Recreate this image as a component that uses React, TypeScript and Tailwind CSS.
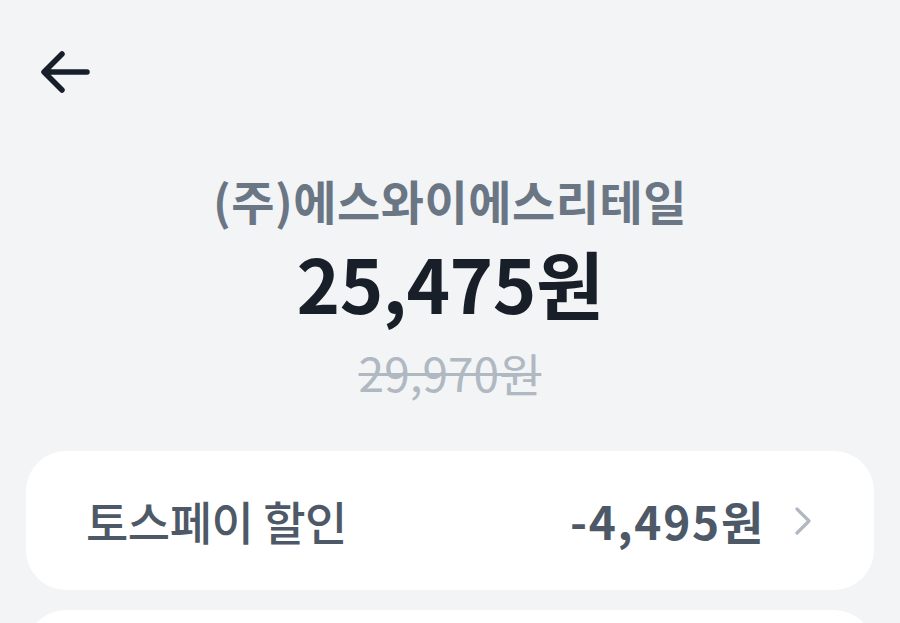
import { ChevronRight } from "lucide-react";

const FONT = "font-['Noto_Sans_CJK_KR','Noto_Sans',sans-serif]";

function BackArrow() {
  return (
    <svg width="52" height="44" viewBox="0 0 52 44" fill="none" aria-hidden="true">
      <path
        d="M47 22H5M22 4L4 22l18 18"
        stroke="#191f28"
        strokeWidth="5.5"
        strokeLinecap="round"
        strokeLinejoin="round"
      />
    </svg>
  );
}

export default function App() {
  return (
    <div className={`min-h-screen bg-[#f2f4f6] ${FONT}`}>
      <div className="pl-[40px] pt-[50px]">
        <BackArrow />
      </div>

      <div className="mt-[79px] flex flex-col items-center">
        <p className="text-[47px] font-semibold leading-[54px] tracking-[0.5px] text-[#6b7684]">
          (주)에스와이에스리테일
        </p>
        <p className="mt-[15px] text-[74px] font-bold leading-[80px] tracking-[-0.5px] text-[#191f28]">
          25,475원
        </p>
        <p className="mt-[24px] text-[46px] font-normal leading-[52px] text-[#b0b8c1] line-through decoration-[3px]">
          29,970원
        </p>
      </div>

      <div className="mx-[26px] mt-[53px] flex flex-col gap-[20px]">
        <div className="flex h-[139px] items-center rounded-[40px] bg-white pl-[60px] pr-[47px]">
          <span className="text-[46px] font-medium tracking-[-0.5px] text-[#4e5968]">
            토스페이 할인
          </span>
          <span className="ml-auto text-[46px] font-bold tracking-[1.75px] text-[#4e5968]">
            -4,495원
          </span>
          <ChevronRight className="ml-[14px] text-[#b0b8c1]" size={48} strokeWidth={1.6} />
        </div>
        <div className="h-[139px] rounded-[40px] bg-white" />
      </div>
    </div>
  );
}
